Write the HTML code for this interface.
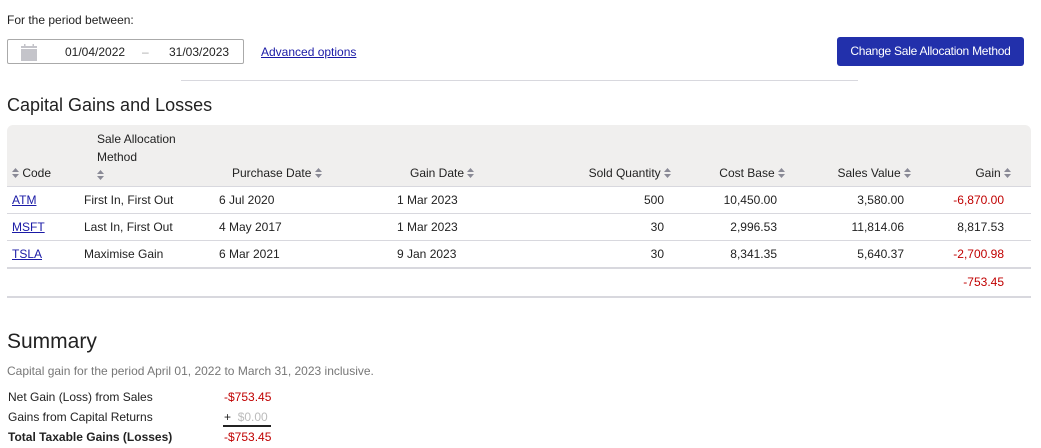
<!DOCTYPE html>
<html><head><style>
*{margin:0;padding:0;box-sizing:border-box}
body{width:1041px;height:448px;background:#fff;font-family:"Liberation Sans",Arial,sans-serif;font-size:12px;color:#222;position:relative;overflow:hidden}
.a{position:absolute;white-space:nowrap}
.r{text-align:right}
.red{color:#c00000}
a{color:#1a1aa6;text-decoration:underline}
.s{display:inline-block;width:7px;height:10px;vertical-align:-1px}
.hl{position:absolute;left:7px;width:1024px;height:1px;background:#d8d8de}
</style></head><body>
<svg width="0" height="0" style="position:absolute"><defs><symbol id="srt" viewBox="0 0 7 10"><path d="M0 4L3.5 0L7 4Z M0 6L3.5 10L7 6Z" fill="#8a8a96"/></symbol></defs></svg>
<div class="a" style="left:7px;top:13px">For the period between:</div>
<div class="a" style="left:7px;top:39px;width:237px;height:25px;border:1px solid #aaa;border-radius:2px"></div>
<svg class="a" style="left:21px;top:44px" width="16" height="17" viewBox="0 0 16 17"><rect x="0" y="2" width="16" height="15" fill="#c4c4ca"/><rect x="3" y="0" width="1.5" height="3" fill="#c4c4ca"/><rect x="11.5" y="0" width="1.5" height="3" fill="#c4c4ca"/><rect x="0" y="4" width="16" height="1" fill="#fff"/></svg>
<div class="a" style="left:65px;top:45px">01/04/2022</div>
<div class="a" style="left:142px;top:45px;color:#aaa">–</div>
<div class="a" style="left:169px;top:45px">31/03/2023</div>
<div class="a" style="left:261px;top:45px"><a>Advanced options</a></div>
<div class="a" style="left:837px;top:37px;width:187px;height:29px;background:#2230ab;border-radius:3px;color:#fff;text-align:center;line-height:29px;letter-spacing:-0.25px">Change Sale Allocation Method</div>
<div class="a" style="left:181px;top:80px;width:677px;height:1px;background:#d8d8de"></div>
<div class="a" style="left:7px;top:95px;font-size:18px;color:#222">Capital Gains and Losses</div>
<div class="a" style="left:7px;top:125px;width:1024px;height:61px;background:#f0efee;border-radius:6px 6px 0 0"></div>
<div class="hl" style="top:186px"></div>
<div class="hl" style="top:213px"></div>
<div class="hl" style="top:240px"></div>
<div class="hl" style="top:267px;height:2px"></div>
<div class="hl" style="top:296px;height:2px"></div>
<div class="a" style="left:97px;top:130px;line-height:18px">Sale Allocation<br>Method<br><svg class="s"><use href="#srt"/></svg></div>
<div class="a" style="left:12px;top:166px"><svg class="s"><use href="#srt"/></svg> Code</div>
<div class="a" style="left:232px;top:166px">Purchase Date <svg class="s"><use href="#srt"/></svg></div>
<div class="a" style="left:410px;top:166px">Gain Date <svg class="s"><use href="#srt"/></svg></div>
<div class="a r" style="right:370px;top:166px">Sold Quantity <svg class="s"><use href="#srt"/></svg></div>
<div class="a r" style="right:256px;top:166px">Cost Base <svg class="s"><use href="#srt"/></svg></div>
<div class="a r" style="right:130px;top:166px">Sales Value <svg class="s"><use href="#srt"/></svg></div>
<div class="a r" style="right:30px;top:166px">Gain <svg class="s"><use href="#srt"/></svg></div>

<div class="a" style="left:12px;top:193px"><a>ATM</a></div>
<div class="a" style="left:84px;top:193px">First In, First Out</div>
<div class="a" style="left:219px;top:193px">6 Jul 2020</div>
<div class="a" style="left:397px;top:193px">1 Mar 2023</div>
<div class="a r" style="right:377px;top:193px">500</div>
<div class="a r" style="right:264px;top:193px">10,450.00</div>
<div class="a r" style="right:137px;top:193px">3,580.00</div>
<div class="a r red" style="right:37px;top:193px">-6,870.00</div>

<div class="a" style="left:12px;top:220px"><a>MSFT</a></div>
<div class="a" style="left:84px;top:220px">Last In, First Out</div>
<div class="a" style="left:219px;top:220px">4 May 2017</div>
<div class="a" style="left:397px;top:220px">1 Mar 2023</div>
<div class="a r" style="right:377px;top:220px">30</div>
<div class="a r" style="right:264px;top:220px">2,996.53</div>
<div class="a r" style="right:137px;top:220px">11,814.06</div>
<div class="a r" style="right:37px;top:220px">8,817.53</div>

<div class="a" style="left:12px;top:247px"><a>TSLA</a></div>
<div class="a" style="left:84px;top:247px">Maximise Gain</div>
<div class="a" style="left:219px;top:247px">6 Mar 2021</div>
<div class="a" style="left:397px;top:247px">9 Jan 2023</div>
<div class="a r" style="right:377px;top:247px">30</div>
<div class="a r" style="right:264px;top:247px">8,341.35</div>
<div class="a r" style="right:137px;top:247px">5,640.37</div>
<div class="a r red" style="right:37px;top:247px">-2,700.98</div>

<div class="a r red" style="right:37px;top:275px">-753.45</div>

<div class="a" style="left:7px;top:330px;font-size:21px">Summary</div>
<div class="a" style="left:7px;top:364px;color:#777">Capital gain for the period April 01, 2022 to March 31, 2023 inclusive.</div>
<div class="a" style="left:8px;top:390px">Net Gain (Loss) from Sales</div>
<div class="a red" style="left:224px;top:390px">-$753.45</div>
<div class="a" style="left:8px;top:410px">Gains from Capital Returns</div>
<div class="a" style="left:224px;top:410px">+ &nbsp;<span style="color:#bbb">$0.00</span></div>
<div class="a" style="left:223px;top:425px;width:48px;height:2px;background:#222"></div>
<div class="a" style="left:8px;top:430px;font-weight:bold">Total Taxable Gains (Losses)</div>
<div class="a red" style="left:224px;top:430px">-$753.45</div>
</body></html>
